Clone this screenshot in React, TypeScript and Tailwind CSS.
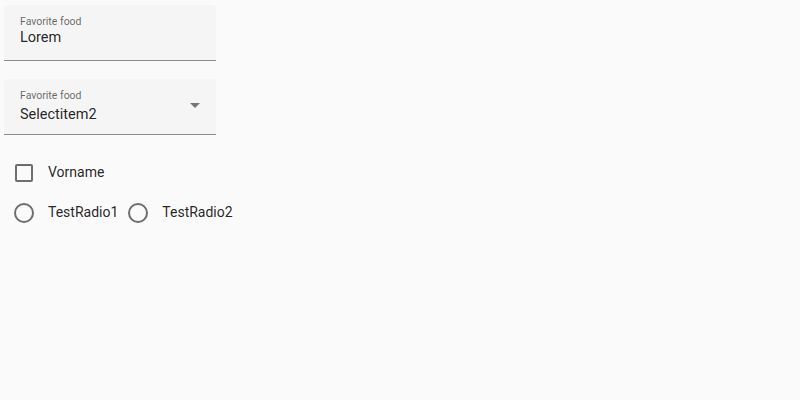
import React, { useState } from "react";

const FillField = ({ label, value, select }: { label: string; value: string; select?: boolean }) => {
  return (
    <div className="relative w-[212px] h-[56px] rounded-t bg-[#f5f5f5] border-b border-[#8c8c8c] px-4 pt-[10px]">
      <p className="text-[10.5px] leading-[14px] text-black/60">{label}</p>
      <p className={select ? "mt-[2px] text-[14.5px] leading-[20px] text-black/87" : "-mt-[1px] text-[14.5px] leading-[20px] text-black/87"}>
        {value}
      </p>
      {select ? (
        <svg className="absolute right-[16px] top-[24px]" width="10" height="5" viewBox="0 0 10 5">
          <path d="M0 0 L5 5 L10 0 Z" fill="#757575" />
        </svg>
      ) : null}
    </div>
  );
};

const Radio = ({ label, checked, onClick }: { label: string; checked: boolean; onClick: () => void }) => (
  <button type="button" onClick={onClick} className="flex items-center">
    <span className="w-[20px] h-[20px] rounded-full border-2 border-[#6e6e6e] flex items-center justify-center">
      {checked ? <span className="w-[10px] h-[10px] rounded-full bg-[#6e6e6e]" /> : null}
    </span>
    <span className="ml-[14px] text-[14px] text-black/87">{label}</span>
  </button>
);

export default function App() {
  const [checked, setChecked] = useState(false);
  const [radio, setRadio] = useState("");

  return (
    <div className="min-h-[400px] w-full bg-[#fafafa] pt-[5px] pl-[4px] font-['Roboto',sans-serif]">
      <FillField label="Favorite food" value="Lorem" />
      <div className="mt-[18px]">
        <FillField label="Favorite food" value="Selectitem2" select />
      </div>
      <button type="button" onClick={() => setChecked(!checked)} className="flex items-center mt-[27px] ml-[11px]">
        <span className="w-[18px] h-[18px] rounded-[2px] border-2 border-[#6e6e6e] bg-transparent" />
        <span className="ml-[15px] text-[14px] text-black/87">Vorname</span>
      </button>
      <div className="flex items-center gap-[10px] mt-[19px] ml-[10px]">
        <Radio label="TestRadio1" checked={radio === "1"} onClick={() => setRadio("1")} />
        <Radio label="TestRadio2" checked={radio === "2"} onClick={() => setRadio("2")} />
      </div>
    </div>
  );
}
